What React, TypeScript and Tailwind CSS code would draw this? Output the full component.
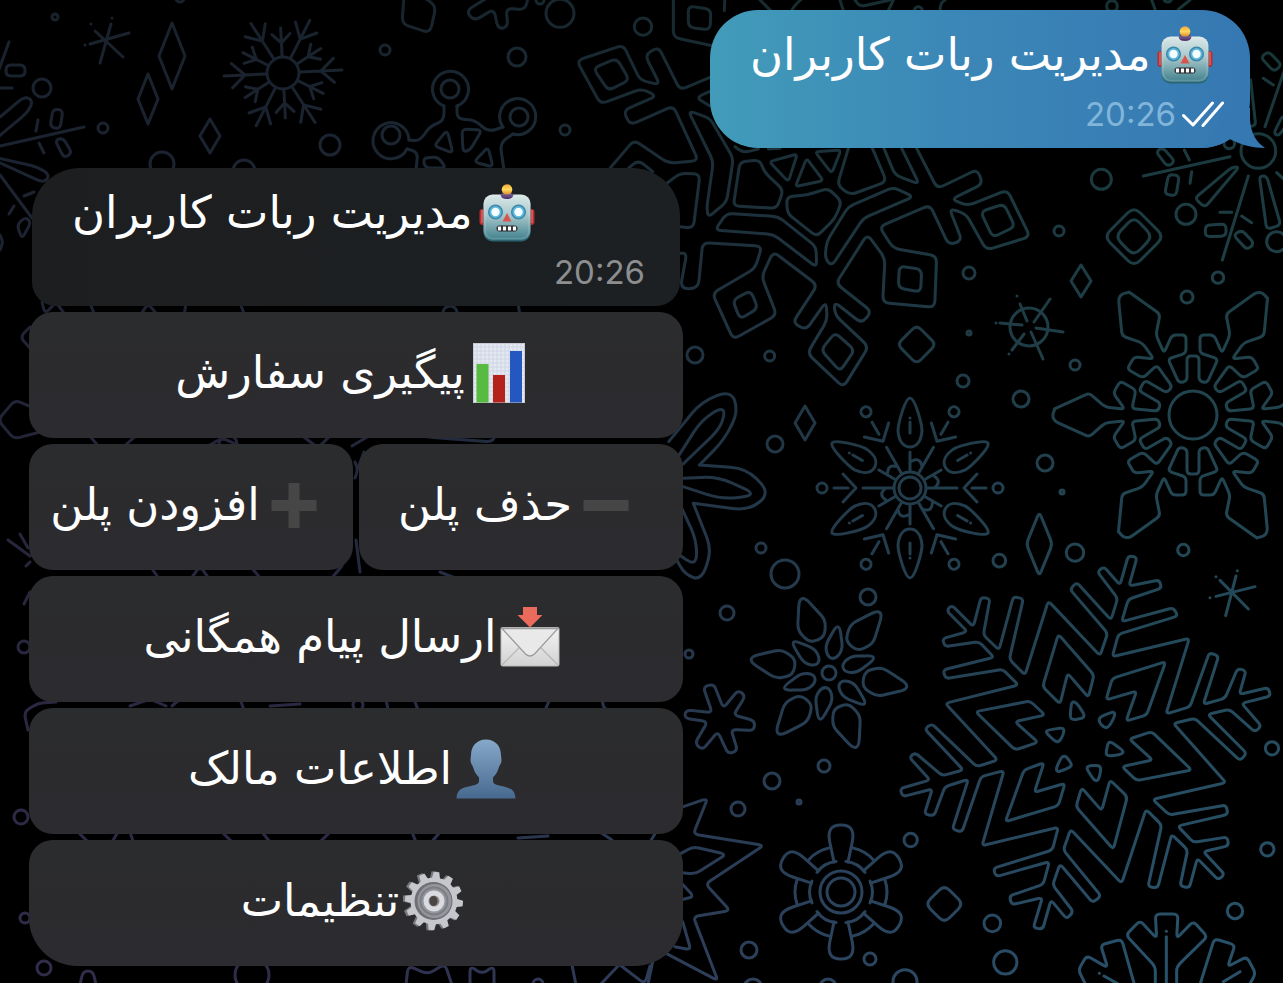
import type { ReactNode } from "react";

/* ---------- wallpaper geometry ---------- */

/** Turns "x,y x,y ..." into a path whose corners are rounded by r. */
function soften(points: string, r: number, open: boolean): string {
  const pts = points.split(" ").map((p) => p.split(",").map(Number));
  const n = pts.length;
  const toward = (a: number[], b: number[]) => {
    const len = Math.hypot(b[0] - a[0], b[1] - a[1]) || 1;
    const k = Math.min(r, len / 2) / len;
    return `${(a[0] + (b[0] - a[0]) * k).toFixed(1)} ${(a[1] + (b[1] - a[1]) * k).toFixed(1)}`;
  };
  let d = "";
  for (let i = 0; i < n; i++) {
    const cur = pts[i];
    if (open && (i === 0 || i === n - 1)) {
      d += `${i === 0 ? "M" : "L"}${cur[0]} ${cur[1]}`;
      continue;
    }
    const prev = pts[(i + n - 1) % n];
    const next = pts[(i + 1) % n];
    d += `${i === 0 ? "M" : "L"}${toward(cur, prev)}Q${cur[0]} ${cur[1]} ${toward(cur, next)}`;
  }
  return open ? d : d + "Z";
}

function Loops({ items, r = 10 }: { items: string[]; r?: number }) {
  return (
    <>
      {items.map((p) => (
        <path key={p} d={soften(p, r, false)} vectorEffect="non-scaling-stroke" />
      ))}
    </>
  );
}

function Lines({ items, r = 10 }: { items: string[]; r?: number }) {
  return (
    <>
      {items.map((p) => (
        <path key={p} d={soften(p, r, true)} vectorEffect="non-scaling-stroke" />
      ))}
    </>
  );
}

function Dots({ items }: { items: number[][] }) {
  return (
    <>
      {items.map(([x, y, r]) => (
        <circle key={`${x}-${y}`} cx={x} cy={y} r={r} vectorEffect="non-scaling-stroke" />
      ))}
    </>
  );
}

function Spin({ x, y, start = 0, children }: { x: number; y: number; start?: number; children: ReactNode }) {
  return (
    <g transform={`translate(${x} ${y})`}>
      {[0, 60, 120, 180, 240, 300].map((a) => (
        <g key={a} transform={`rotate(${a + start})`}>
          {children}
        </g>
      ))}
    </g>
  );
}

const sparkles = [
  [172, 56, 13, 33],
  [148, 99, 10, 25],
  [210, 136, 10, 17],
  [805, 423, 10, 17],
  [1081, 281, 10, 16],
];

function Drawing() {
  return (
    <>
      {/* large branching flake, lower right */}
      <g transform="translate(880 540) scale(0.33333)">
        <Loops
          r={12}
          items={[
            "297,305 195,320 187,296 262,275 200,212 215,195 280,260 303,172 330,176 310,285 357,330 400,170 430,176 388,358 435,405 505,183 660,347 683,280 570,148 590,127 693,240 713,175 652,95 672,80 720,135 745,47 771,52 747,138 838,120 845,144 745,178 725,245 880,203 894,228 715,283 697,350 928,295 858,522 930,500 988,338 1016,348 970,493 1035,475 1073,385 1098,392 1078,463 1165,443 1172,468 1085,490 1144,558 1125,576 1048,508 983,523 1100,640 1080,662 945,535 880,550 1038,728 818,778 868,825 1038,795 1044,823 893,858 940,907 1042,891 1046,917 970,935 1034,1003 1015,1020 952,955 928,1044 900,1038 923,930 875,883 833,1044 804,1040 845,855 798,808 725,1030 572,868 550,930 663,1068 638,1088 540,972 518,1035 580,1115 560,1137 513,1080 488,1168 460,1163 487,1073 395,1094 388,1068 490,1033 508,965 348,1010 340,985 517,930 535,862 306,917 372,692 303,710 246,876 217,868 265,718 195,740 162,828 133,822 157,747 68,770 60,746 150,720 88,652 105,638 187,707 250,690 134,567 155,551 290,680 353,660 196,490 415,435 368,388 197,416 189,390 342,352",
            "535,283 642,405 625,472 563,400 540,492 488,440",
            "857,365 800,525 738,543 770,453 678,480 697,415",
            "815,575 935,690 770,722 726,680 818,660 748,597",
            "690,720 742,770 700,928 588,800 605,743 665,812",
            "492,668 463,757 555,730 535,797 376,845 432,690",
            "287,515 450,483 495,525 405,545 474,607 405,630",
          ]}
        />
        <Loops
          r={14}
          items={[
            "575,484 590,488 614,525 608,535 577,540 570,530",
            "704,514 704,530 685,563 672,563 656,545 660,530",
            "497,577 503,570 553,563 550,585 537,606 525,604",
            "685,606 697,608 733,635 720,645 680,648 678,635",
            "545,650 558,648 576,673 570,682 532,697 528,685",
            "618,683 630,676 662,677 662,695 655,722 643,722",
          ]}
        />
        <Loops r={22} items={["193,1035 250,1092 193,1149 136,1092"]} />
        <Lines
          r={14}
          items={[
            "765,1340 725,1198 662,1215 683,1283 620,1247 595,1290 620,1340",
            "826,1340 826,1280 738,1185 780,1142 830,1195 826,1122 894,1122 890,1195 940,1144 982,1190 890,1280 890,1340",
            "958,1340 1003,1196 1065,1215 1043,1280 1100,1250 1127,1300 1105,1340",
            "859,1190 859,1340",
            "859,1174 859,1174",
            "658,1300 658,1300",
            "672,1308 720,1335",
            "1080,1295 1030,1325",
            "1008,110 1008,110",
            "1020,121 1105,207",
            "1072,92 1072,92",
            "1068,108 1037,227",
            "990,173 990,173",
            "1008,169 1125,140",
          ]}
        />
        <Loops r={14} items={["478,-84 517,12 478,108 439,12"]} />
        <Dots
          items={[
            [358, 62, 19], [585, 38, 26], [910, 30, 17], [1176, 625, 20], [1162, 928, 20],
            [92, 900, 20], [337, 1150, 25], [376, 1267, 35], [1065, 1113, 23], [75, 1325, 36],
          ]}
        />
      </g>

      {/* square-tipped flake behind the outgoing message */}
      <g transform="translate(560 0) scale(0.33333)">
        <Lines
          r={20}
          items={[
            "450,232 360,270 295,140 255,165 300,255 240,240 190,135 50,182 122,312 245,266 290,288 190,332 210,375 340,318 415,482 325,490 222,420 150,505",
            "360,760 380,760 362,860 385,868 415,860 428,728 606,738 585,805 457,880 520,1018 650,945 605,830 640,755 772,855 698,968 738,990 798,905 802,960 742,1060 850,1162 926,1040 825,945 822,905 905,970 935,935 828,850 922,703 975,775 968,908 1124,922 1130,768 1000,745 958,680 1110,615 1166,735 1206,722 1168,625 1218,642 1279,750 1410,710 1342,570 1224,617 1174,598 1268,552 1252,508 1132,566 1070,445",
            "340,-30 340,112 460,138",
            "495,-20 493,32",
            "455,272 408,293 450,318",
            "205,505 235,480 278,515",
            "320,550 360,520 420,522 400,685 360,680",
            "865,445 832,555 870,585 980,545 935,440",
            "970,440 1005,525 1078,553 1025,445",
            "525,440 550,458 595,447",
            "625,447 660,445",
            "600,0 632,32",
            "695,32 705,15 722,0",
            "840,0 850,32",
            "885,0 900,20 990,0",
            "1000,0 985,32",
            "1140,32 1142,10 1155,0",
          ]}
        />
        <Loops
          r={18}
          items={[
            "385,18 453,28 450,90 385,82",
            "100,205 170,175 208,240 145,272",
            "385,332 450,355 520,475 500,605 445,652 440,625 460,485",
            "540,485 600,480 612,515 670,570 650,625 520,618",
            "500,640 655,650 768,740 770,802 640,703 465,690",
            "1000,562 1060,590 910,655 815,798 795,775 800,725 865,620",
            "680,590 740,585 805,565 845,605 825,655 770,710 682,640",
            "1262,635 1332,612 1365,680 1298,712",
            "1018,798 1085,808 1082,876 1015,864",
            "518,900 572,872 594,925 540,957",
            "825,998 884,1050 840,1114 783,1050",
            "1070,975 1128,1033 1070,1092 1012,1033",
          ]}
        />
        <Loops r={12} items={["628,485 712,462 685,545", "740,475 790,542 706,560", "765,455 843,450 815,520"]} />
        <Dots items={[[0, 40, 42], [249, 80, 26], [15, 390, 15], [405, 1065, 24], [629, 1068, 15], [1075, 32, 12]]} />
      </g>

      {/* burst on the right edge */}
      <g transform="translate(1090 0) scale(0.33333)">
        <Dots items={[[66, 18, 16], [34, 538, 30], [505, 453, 52], [288, 643, 30], [560, 725, 30], [384, 833, 17], [233, -6, 12], [418, 430, 16]]} />
        <Loops r={26} items={["132,620 222,710 132,800 42,710", "132,650 188,710 132,768 75,710"]} />
        <Loops
          r={14}
          items={[
            "448,500 345,622 314,595 425,502",
            "508,528 530,528 572,675 530,688",
            "198,455 218,442 255,485 232,500",
            "236,523 268,527 258,588 224,582",
            "346,676 408,672 408,708 346,710",
            "430,705 455,690 493,730 472,750",
            "512,172 535,154 575,195 552,215",
            "551,400 579,345 600,360 566,408",
          ]}
        />
        <Lines
          items={[
            "160,528 420,470", "475,528 397,780", "525,380 590,190", "390,637 425,637", "455,648 485,668",
            "283,450 298,480", "305,515 300,550", "520,235 550,255", "482,240 497,375 480,380", "560,518 590,545",
            "185,0 195,28", "265,28 300,0",
          ]}
        />
      </g>

      {/* kite-armed flake */}
      <circle cx="1193" cy="415" r="24" />
      <Spin x={1193} y={415}>
        <Lines
          r={4}
          items={[
            "-64,-123 -33,-101 -37,-80 -29,-62 -21,-80 -7,-80 -7,-62 -25,-56 -14,-32 -6,-34 -6,-59 6,-59 6,-34 14,-32 25,-56 7,-62 7,-80 21,-80 29,-62 37,-80 33,-101 64,-123 70,-122 74,-117",
          ]}
        />
      </Spin>

      {/* ship-wheel sparkle */}
      <circle cx="1029" cy="327" r="19" />
      <Lines items={["1020,304 1027,321", "1031,332 1043,359", "1050,299 1034,322", "1024,334 1012,350", "1000,323 1022,325", "1036,328 1063,332", "1017,296 1017,296", "996,323 996,323", "1009,354 1009,354"]} />

      {/* petalled flake */}
      <circle cx="910" cy="488" r="16" />
      <circle cx="910" cy="488" r="11" />
      <Spin x={910} y={488}>
        <path d="M0-90C5-90 12-64 12-57 11-46 6-41 0-41S-11-46-12-57C-12-64-5-90 0-90Z" />
        <path d="M0-66V-55M0-70V-70M0-18V-36M2-27Q10-31 12-22" />
      </Spin>
      <Spin x={910} y={488} start={30}>
        <path d="M0-76V-62M-14-67L0-54 14-67M0-47V-18" />
        <circle cx="0" cy="-88" r="5" />
      </Spin>

      {/* leaf flake */}
      <circle cx="829" cy="673" r="7" />
      <Spin x={829} y={673} start={-20}>
        <Loops r={7} items={["-3,-79 3,-79 15,-51 8,-35 -8,-35 -15,-51"]} />
      </Spin>
      <Spin x={829} y={673} start={11}>
        <Loops r={7} items={["-2,-47 2,-47 9,-26 4,-15 -4,-15 -9,-26"]} />
      </Spin>

      {/* wheel with six handles */}
      <circle cx="841" cy="892" r="21" />
      <circle cx="841" cy="892" r="14" />
      <Spin x={841} y={892}>
        <Lines r={9} items={["-7,-30 -13,-58 -8,-67 8,-67 13,-58 7,-30"]} />
      </Spin>
      <Spin x={841} y={892} start={30}>
        <path d="M-11-29Q0-34 11-29M-12-44Q0-48 12-44" />
      </Spin>

      {/* partially hidden flower and star beside the keyboard */}
      <g transform="translate(640 390) scale(0.41 0.33333)">
        <Lines
          r={40}
          items={[
            "70,155 150,35 222,0 240,65 205,150 145,225",
            "145,225 260,235 318,310 265,362 130,340",
            "130,340 175,480 150,570 110,555 85,500",
            "90,205 150,90 208,45 200,110 105,222",
            "105,265 190,260 288,315 200,328 105,290",
            "100,350 138,450 138,530 90,490",
          ]}
        />
      </g>
      <g transform="translate(640 680) scale(0.41 0.33333)">
        <Loops r={14} items={["154,20 180,12 203,84 240,30 257,48 228,105 280,122 278,152 222,148 238,212 215,222 190,155 152,210 134,190 165,125 108,114 112,90 176,98"]} />
        <Lines
          r={14}
          items={[
            "70,395 165,355 130,462 302,496 160,612 220,692 130,710 190,902 60,818",
            "100,520 130,500 210,523 135,582 100,578",
            "100,608 132,650 100,659",
            "104,725 124,810 85,800",
            "20,909 35,820",
          ]}
        />
      </g>

      {/* twelve-armed flake, upper left */}
      <circle cx="283" cy="73" r="16" />
      <Spin x={283} y={73} start={27}>
        <path d="M0-17V-59M-12-51L0-38 12-51" />
      </Spin>
      <Spin x={283} y={73} start={-3}>
        <path d="M0-17V-45M-9-39L0-30 9-39" />
      </Spin>

      {/* molecule */}
      <Dots items={[[450, 89, 9], [391, 135, 9], [519, 117, 9]]} />
      <path d="M444 106A18 18 0 1 1 457 106M409 140A18 18 0 1 0 407 149M503 127A18 18 0 1 1 513 134" />
      <Lines r={8} items={["409,140 420,141 430,126 444,121 444,106", "457,106 457,119 475,120 488,132 503,127", "407,149 418,152 416,170", "513,134 500,143 504,170"]} />
      <Loops r={5} items={["447,130 453,153 434,146", "462,129 482,130 470,150 463,152", "423,158 438,157 446,168 425,168", "488,147 493,167 474,162"]} />

      {/* burst on the left edge */}
      <Loops r={5} items={["6,65 25,65 25,76 6,76", "53,109 63,110 60,129 50,127", "55,140 63,138 72,153 64,158", "17,225 25,217 31,222 22,239"]} />
      <Lines
        r={8}
        items={["-2,72 9,42", "0,88 12,88", "0,117 25,96 33,101 28,112 -2,137", "0,146 84,127", "38,120 36,131", "39,143 44,153", "-2,158 38,167 50,175 44,183 -2,162", "0,175 32,218", "24,196 34,192", "14,206 9,214", "0,235 3,242 0,250"]}
      />

      {/* small six-ray star and splashes along the top */}
      <Lines r={3} items={["95,31 123,57", "111,24 100,63", "90,44 129,33", "112,18 112,18", "91,24 91,24", "85,45 85,45"]} />
      <Lines r={7} items={["404,-4 402,24 430,33 436,6 422,-4", "487,-2 466,11 474,21 494,9 498,29 508,27 506,8 525,10 528,-2"]} />

      {/* pieces between and around the keyboard rows */}
      <Lines
        r={6}
        items={[
          "42,302 45,314 56,302 66,316", "90,303 95,316", "140,316 148,303 158,316", "186,303 184,316", "240,303 245,316", "518,303 520,316",
          "30,327 20,337 30,348", "40,432 14,439 -2,420 15,400 34,408",
          "88,434 100,448", "120,450 140,432", "208,446 222,438 240,446", "300,434 318,448 332,434", "352,446 372,434", "400,434 440,438 492,442 496,434", "364,452 358,468",
          "8,540 30,556", "20,534 28,548", "26,566 30,562", "30,592 24,604",
          "150,566 160,580", "190,580 200,566 210,580", "250,566 262,580", "330,580 342,566", "355,462 358,470 355,478", "356,540 360,572", "440,572 460,580",
          "28,730 24,712 38,703 56,702", "130,706 150,699 166,706", "172,706 180,699", "240,699 244,710", "270,706 300,704", "386,699 388,710", "414,699 418,710", "545,710 550,699", "602,699 604,710 618,710",
          "80,834 88,842", "112,842 118,832", "130,832 134,844", "222,832 234,844", "262,832 270,842", "320,842 330,832", "412,832 416,842", "440,832 430,844", "518,838 548,836", "600,832 612,840", "650,842 656,832",
          "80,985 83,971 93,971 96,985", "406,985 408,966 428,974 445,964 452,985", "470,985 470,966 482,974 494,966 494,985", "572,965 576,985", "600,985 618,966", "620,965 645,984 650,966",
        ]}
      />

      <path d={sparkles.map(([x, y, w, h]) => `M${x} ${y - h}L${x + w} ${y} ${x} ${y + h} ${x - w} ${y}Z`).join("")} />
      <Dots
        items={[
          [55, 17, 3], [42, 88, 9], [103, 128, 5], [330, 145, 10], [385, 50, 5], [517, 57, 9], [162, 164, 12], [244, 171, 11],
          [450, 313, 7], [228, 444, 9], [1059, 231, 5], [969, 273, 6], [969, 333, 2], [1075, 365, 5], [963, 381, 6], [1021, 399, 8],
          [1187, 297, 6], [775, 444, 8], [1045, 463, 8], [1062, 492, 2], [761, 548, 5], [785, 574, 14],
          [868, 597, 8], [727, 613, 7], [689, 654, 4], [824, 766, 6], [772, 781, 8], [799, 802, 2],
          [738, 809, 7], [749, 950, 8], [870, 959, 6], [753, 988, 9], [828, 987, 8], [21, 817, 7], [25, 918, 5],
          [44, 968, 7], [252, 975, 17], [538, 984, 5], [24, 647, 6], [358, 705, 5], [540, 0, 4], [180, -2, 4],
        ]}
      />
    </>
  );
}

function Wallpaper() {
  return (
    <svg
      className="pointer-events-none absolute inset-0 -z-10 h-full w-full"
      viewBox="0 0 1283 983"
      preserveAspectRatio="xMidYMid slice"
      aria-hidden="true"
    >
      <defs>
        <linearGradient id="cool" x1="0" y1="0" x2="0" y2="1">
          <stop offset="0" stopColor="#173335" />
          <stop offset="0.35" stopColor="#20424b" />
          <stop offset="1" stopColor="#29526b" />
        </linearGradient>
        <linearGradient id="warm" x1="0" y1="0" x2="0" y2="1">
          <stop offset="0" stopColor="#18222c" />
          <stop offset="0.4" stopColor="#222437" />
          <stop offset="1" stopColor="#322c4b" />
        </linearGradient>
        <linearGradient id="across" x1="0" y1="0" x2="1" y2="0">
          <stop offset="0.2" stopColor="#000" />
          <stop offset="0.9" stopColor="#fff" />
        </linearGradient>
        <mask id="fade" maskUnits="userSpaceOnUse" x="0" y="0" width="1283" height="983">
          <rect width="1283" height="983" fill="url(#across)" />
        </mask>
        <mask id="lines" maskUnits="userSpaceOnUse" x="0" y="0" width="1283" height="983">
          <g fill="none" stroke="#fff" strokeWidth="3" strokeLinecap="round" strokeLinejoin="round">
            <Drawing />
          </g>
        </mask>
      </defs>
      <g mask="url(#lines)">
        <rect width="1283" height="983" fill="url(#warm)" />
        <rect width="1283" height="983" fill="url(#cool)" mask="url(#fade)" />
      </g>
    </svg>
  );
}

/* ---------- emoji ---------- */

const emojiClass = "h-[60px] w-[60px] shrink-0";

function Robot() {
  return (
    <svg className={emojiClass} viewBox="0 0 60 60" aria-hidden="true">
      <defs>
        <linearGradient id="head" x1="0" y1="0" x2="0" y2="1">
          <stop offset="0" stopColor="#dbe8e8" />
          <stop offset="0.45" stopColor="#a9c8cc" />
          <stop offset="1" stopColor="#40808c" />
        </linearGradient>
        <linearGradient id="bulb" x1="0" y1="0" x2="0" y2="1">
          <stop offset="0" stopColor="#f0a53a" />
          <stop offset="0.5" stopColor="#ffd95b" />
          <stop offset="1" stopColor="#dd8727" />
        </linearGradient>
      </defs>
      <rect x="2.500" y="26" width="7" height="16" rx="3" fill="#b92d33" />
      <rect x="50.500" y="26" width="7" height="16" rx="3" fill="#b92d33" />
      <path d="M5 27v13M55 27v13" stroke="#e0605f" strokeWidth="1.5" />
      <path d="M24 14Q24 8 30 8t6 6Z" fill="#54356f" />
      <circle cx="30" cy="6.500" r="5.300" fill="url(#bulb)" />
      <rect x="6.500" y="12.500" width="47" height="46" rx="9" fill="#2b6470" />
      <rect x="6.500" y="11.500" width="47" height="45.500" rx="9" fill="url(#head)" />
      <path d="M23.500 11.500H36.500Q36 16 30 16T23.500 11.500Z" fill="#54356f" />
      <rect x="8" y="13" width="44" height="42.500" rx="8" fill="none" stroke="#fff" strokeOpacity="0.15" strokeWidth="1.500" />
      <circle cx="18.500" cy="29" r="6.800" fill="#5fb6dc" stroke="#3c87a8" strokeWidth="1.500" />
      <circle cx="41.500" cy="29" r="6.800" fill="#5fb6dc" stroke="#3c87a8" strokeWidth="1.500" />
      <circle cx="18.500" cy="29" r="4.200" fill="#f2feff" />
      <circle cx="41.500" cy="29" r="4.200" fill="#f2feff" />
      <path d="M30 30l4.500 8.500h-9Z" fill="#d8544c" />
      <rect x="19.500" y="42.500" width="21" height="6" rx="3" fill="#26272a" />
      <path d="M22.500 43.500v4M27.500 43.500v4M32.500 43.500v4M37.500 43.500v4" stroke="#fff" strokeWidth="3.200" />
    </svg>
  );
}

function Chart() {
  return (
    <svg className={emojiClass} viewBox="0 0 60 60" aria-hidden="true">
      <rect x="4.500" y="0.500" width="51" height="59" fill="#e4e8f1" stroke="#c6cad3" />
      <path
        d="M8 1v58M12 1v58M16 1v58M20 1v58M24 1v58M28 1v58M32 1v58M36 1v58M40 1v58M44 1v58M48 1v58M52 1v58M5 4h50M5 8h50M5 12h50M5 16h50M5 20h50M5 24h50M5 28h50M5 32h50M5 36h50M5 40h50M5 44h50M5 48h50M5 52h50M5 56h50"
        stroke="#c9d0e0"
        strokeWidth="0.700"
      />
      <rect x="7.500" y="21" width="12" height="38.500" fill="#56bb40" />
      <rect x="24" y="32" width="12" height="27.500" fill="#b4231b" />
      <rect x="41" y="8" width="12" height="51.500" fill="#2458c0" />
    </svg>
  );
}

function Plus() {
  return (
    <svg className={emojiClass} viewBox="0 0 60 60" aria-hidden="true">
      <path d="M24.500 8h11v17h17v11h-17v17h-11V36h-17V25h17Z" fill="#464646" />
    </svg>
  );
}

function Minus() {
  return (
    <svg className={emojiClass} viewBox="0 0 60 60" aria-hidden="true">
      <path d="M7.500 25h45v11h-45Z" fill="#464646" />
    </svg>
  );
}

function Envelope() {
  return (
    <svg className={emojiClass} viewBox="0 0 60 60" aria-hidden="true">
      <defs>
        <linearGradient id="paper" x1="0" y1="0" x2="0" y2="1">
          <stop offset="0" stopColor="#f3f3f3" />
          <stop offset="1" stopColor="#d2d2d2" />
        </linearGradient>
      </defs>
      <rect x="1" y="20.500" width="58" height="38.500" rx="1.500" fill="url(#paper)" stroke="#b9b9b9" />
      <path d="M2 58L22 38M58 58L38 38" stroke="#b5b5b5" strokeWidth="1.200" />
      <path d="M2 21.500L25.500 47Q30 51 34.500 47L58 21.500Z" fill="#e9e9e9" stroke="#9c9c9c" strokeWidth="1.300" />
      <path d="M23 0h14v8h5.500L30 20.500 17.500 8H23Z" fill="#ea6a5b" />
    </svg>
  );
}

function Person() {
  return (
    <svg className={emojiClass} viewBox="0 0 60 60" aria-hidden="true">
      <defs>
        <linearGradient id="bust" x1="0" y1="0" x2="0" y2="1">
          <stop offset="0" stopColor="#86a8c9" />
          <stop offset="1" stopColor="#48698f" />
        </linearGradient>
      </defs>
      <path
        d="M30 0.500C20.500 0.500 15 7.500 15 16c0 2-.8 4-.3 7 .5 2.500 1.800 3 2.300 5 1.500 5 3.500 8 6 10.500V42c0 3-3.500 4-8 5C5 49 1 51 .5 59.500h59C59 51 55 49 45 47c-4.500-1-8-2-8-5v-3.500c2.500-2.500 4.500-5.500 6-10.500.5-2 1.800-2.500 2.300-5 .5-3-.3-5-.3-7C45 7.500 39.500 .5 30 .5Z"
        fill="url(#bust)"
      />
    </svg>
  );
}

function Gear() {
  return (
    <svg className={emojiClass} viewBox="0 0 60 60" aria-hidden="true">
      <g transform="translate(29 30)" fill="#77787d">
        {[5, 35, 65, 95, 125, 155, 185, 215, 245, 275, 305, 335].map((a) => (
          <path key={a} d="M-4.500-20L-3-29.500H3L4.500-20Z" transform={`rotate(${a})`} />
        ))}
      </g>
      <g transform="translate(31 30)" fill="#c6c7cc">
        {[5, 35, 65, 95, 125, 155, 185, 215, 245, 275, 305, 335].map((a) => (
          <path key={a} d="M-4.500-20L-2.800-29H2.800L4.500-20Z" transform={`rotate(${a})`} />
        ))}
        <circle r="23.500" />
      </g>
      <circle cx="30.500" cy="30" r="19" fill="#6e7075" />
      <circle cx="31.500" cy="30" r="17" fill="#94969c" />
      <circle cx="31" cy="30" r="13.500" fill="none" stroke="#7b7d83" strokeWidth="2" />
      <circle cx="31" cy="30" r="8" fill="#8a8583" stroke="#dadbe0" strokeWidth="5" />
      <ellipse cx="30.500" cy="30" rx="4" ry="5" fill="#4a4543" />
    </svg>
  );
}

/* ---------- chat ---------- */

function Label({ icon, children }: { icon: ReactNode; children: ReactNode }) {
  return (
    <span dir="rtl" className="flex w-fit items-center gap-1 whitespace-nowrap text-[45px] leading-[60px]">
      {icon}
      <span>{children}</span>
    </span>
  );
}

function Key({ icon, children, className = "" }: { icon: ReactNode; children: ReactNode; className?: string }) {
  return (
    <button
      type="button"
      className={`flex h-[126px] min-w-0 flex-1 items-center justify-center rounded-3xl bg-linear-to-b from-[#2b2c2e] to-[#2c2b2f] pr-2 pb-1 text-white ${className}`}
    >
      <Label icon={icon}>{children}</Label>
    </button>
  );
}

export default function App() {
  return (
    <main className="relative isolate flex min-h-screen flex-col gap-5 overflow-hidden bg-black pt-[10px] pr-[33px] pb-[17px] pl-[29px] font-['DejaVu_Sans',sans-serif] text-white">
      <Wallpaper />

      <article className="relative w-full max-w-[540px] self-end rounded-[48px] bg-linear-to-r from-[#429cb9] via-[#3b87b7] via-45% to-[#3678b2] pt-[15px] pb-[14px] pl-10">
        <svg className="absolute right-[-15px] bottom-0 h-10 w-[62px]" viewBox="0 0 62 40" aria-hidden="true">
          <path d="M30 0H47V12C48 25 53 34 62 40 50 40 38 37 27 31 20 36 10 39.500 0 40Z" fill="#3678b2" />
        </svg>
        <Label icon={<Robot />}>مدیریت ربات کاربران</Label>
        <div className="relative mt-[9px] flex items-center justify-end gap-[6px] pr-[26px] font-['Inter',sans-serif] text-[33px] leading-10 text-[#82b5da]">
          <time dateTime="20:26">20:26</time>
          <svg className="h-[27px] w-[42px]" viewBox="0 0 42 27" role="img" aria-label="Read">
            <path d="M1.500 14.500L11 24 30.500 2M21 24.500L40.500 2" fill="none" stroke="#fff" strokeWidth="3" strokeLinecap="round" strokeLinejoin="round" />
          </svg>
        </div>
      </article>

      <section className="flex w-full max-w-[654px] flex-col gap-[6px]">
        <article className="mx-[3px] rounded-t-[48px] rounded-b-3xl bg-linear-to-r from-[#1d1e20] to-[#1c2022] pt-[15px] pb-[14px] pl-10">
          <Label icon={<Robot />}>مدیریت ربات کاربران</Label>
          <div className="mt-[9px] flex justify-end pr-[35px] font-['Inter',sans-serif] text-[33px] leading-10 text-[#8d8e90]">
            <time dateTime="20:26">20:26</time>
          </div>
        </article>
        <div className="flex">
          <Key icon={<Chart />}>پیگیری سفارش</Key>
        </div>
        <div className="flex gap-[6px]">
          <Key icon={<Plus />}>افزودن پلن</Key>
          <Key icon={<Minus />}>حذف پلن</Key>
        </div>
        <div className="flex">
          <Key icon={<Envelope />}>ارسال پیام همگانی</Key>
        </div>
        <div className="flex">
          <Key icon={<Person />}>اطلاعات مالک</Key>
        </div>
        <div className="flex">
          <Key icon={<Gear />} className="rounded-b-[48px]">
            تنظیمات
          </Key>
        </div>
      </section>
    </main>
  );
}
